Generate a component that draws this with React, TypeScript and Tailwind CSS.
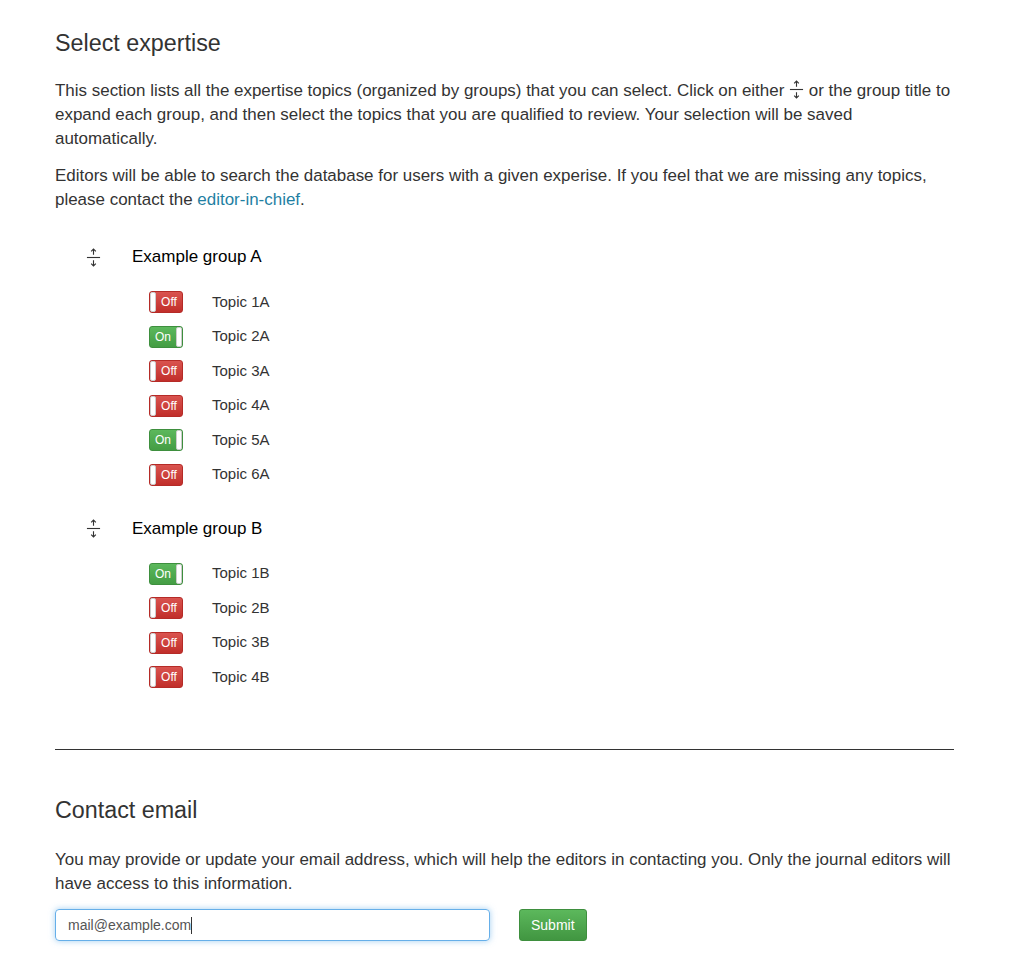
import React, { useState } from "react";

type Topic = { name: string; on: boolean };
type Group = { title: string; topics: Topic[] };

const GROUPS: Group[] = [
  {
    title: "Example group A",
    topics: [
      { name: "Topic 1A", on: false },
      { name: "Topic 2A", on: true },
      { name: "Topic 3A", on: false },
      { name: "Topic 4A", on: false },
      { name: "Topic 5A", on: true },
      { name: "Topic 6A", on: false },
    ],
  },
  {
    title: "Example group B",
    topics: [
      { name: "Topic 1B", on: true },
      { name: "Topic 2B", on: false },
      { name: "Topic 3B", on: false },
      { name: "Topic 4B", on: false },
    ],
  },
];

function ExpandIcon({ className = "" }: { className?: string }) {
  return (
    <svg viewBox="0 0 16 20" className={className} aria-hidden="true">
      <path d="M8 1v6M5.5 3.5L8 1l2.5 2.5" stroke="#333" strokeWidth="1.2" fill="none" />
      <path d="M1 10h14" stroke="#333" strokeWidth="1.2" />
      <path d="M8 13v6M5.5 16.5L8 19l2.5-2.5" stroke="#333" strokeWidth="1.2" fill="none" />
    </svg>
  );
}

function Toggle({ on, onClick }: { on: boolean; onClick: () => void }) {
  return (
    <button
      type="button"
      onClick={onClick}
      className={`flex h-[22px] w-[34px] items-center rounded-[3px] border text-[12px] leading-none text-white ${
        on
          ? "flex-row border-[#3e8f3e] bg-gradient-to-b from-[#5cb85c] to-[#449d44]"
          : "flex-row-reverse border-[#b52b27] bg-gradient-to-b from-[#d9534f] to-[#c12e2a]"
      }`}
    >
      <span className="flex-1 text-center">{on ? "On" : "Off"}</span>
      <span className="h-full w-[6px] rounded-[2px] border border-[#ccc] bg-white" />
    </button>
  );
}

export default function App() {
  const [groups, setGroups] = useState(GROUPS);

  const flip = (g: number, t: number) => {
    setGroups((prev) =>
      prev.map((grp, gi) =>
        gi !== g
          ? grp
          : {
              ...grp,
              topics: grp.topics.map((tp, ti) => (ti === t ? { ...tp, on: !tp.on } : tp)),
            }
      )
    );
  };

  return (
    <div
      className="min-h-[972px] bg-white text-[#333]"
      style={{ fontFamily: '"Liberation Sans", Arial, sans-serif' }}
    >
      <div className="ml-[55px] w-[899px] pt-[29px]">
        <h2 className="text-[23.3px] leading-[28px]">Select expertise</h2>

        <p className="mt-[22px] text-[16.97px] leading-[24px]">
          This section lists all the expertise topics (organized by groups) that you can select. Click on either{" "}
          <ExpandIcon className="inline-block h-[19px] w-[15px] align-[-3px]" /> or the group title to expand each
          group, and then select the topics that you are qualified to review. Your selection will be saved
          automatically.
        </p>
        <p className="mt-[13px] text-[16.97px] leading-[24px]">
          Editors will be able to search the database for users with a given experise. If you feel that we are missing
          any topics, please contact the{" "}
          <a href="#" className="text-[#1f7fa3]">
            editor-in-chief
          </a>
          .
        </p>

        <div className="mt-[33px] flex flex-col gap-[31px]">
          {groups.map((grp, gi) => (
            <div key={grp.title}>
              <div className="flex h-[24px] items-center">
                <ExpandIcon className="ml-[31px] h-[19px] w-[15px]" />
                <span className="ml-[31px] text-[17px] text-black">{grp.title}</span>
              </div>
              <div className="mt-[22px] flex flex-col gap-[12.5px]">
                {grp.topics.map((tp, ti) => (
                  <div key={tp.name} className="flex h-[22px] items-center pl-[94px]">
                    <Toggle on={tp.on} onClick={() => flip(gi, ti)} />
                    <span className="ml-[29px] text-[15px]">{tp.name}</span>
                  </div>
                ))}
              </div>
            </div>
          ))}
        </div>

        <hr className="mt-[61px] border-t border-[#333]" />

        <h2 className="mt-[46px] text-[23.3px] leading-[28px]">Contact email</h2>
        <p className="mt-[24px] text-[16.97px] leading-[24px]">
          You may provide or update your email address, which will help the editors in contacting you. Only the
          journal editors will have access to this information.
        </p>

        <div className="mt-[13px] flex items-center gap-[29px]">
          <div className="flex h-[32px] w-[435px] items-center rounded-[4px] border border-[#66afe9] px-[12px] shadow-[0_0_6px_rgba(102,175,233,0.6)]">
            <span className="text-[14px] text-[#555]">mail@example.com</span>
            <span className="h-[17px] w-px bg-[#333]" />
          </div>
          <button
            type="button"
            className="h-[32px] rounded-[3px] border border-[#3e8f3e] bg-gradient-to-b from-[#5cb85c] to-[#419641] px-[11px] text-[14px] text-white"
          >
            Submit
          </button>
        </div>
      </div>
    </div>
  );
}
